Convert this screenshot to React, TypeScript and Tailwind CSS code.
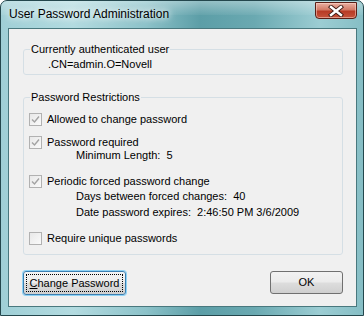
import React from "react";

function Check({ checked }: { checked: boolean }) {
  return (
    <div className="w-[13px] h-[13px] shrink-0 border border-[#b1b1b1] bg-[linear-gradient(135deg,#e8e8e8,#fafafa)] flex items-center justify-center">
      {checked && (
        <svg width="9" height="9" viewBox="0 0 9 9">
          <path d="M1 4.5 L3.5 7 L8 1.5" fill="none" stroke="#a3a3a3" strokeWidth="1.4" />
        </svg>
      )}
    </div>
  );
}

function CheckRow({ checked, label, className }: { checked: boolean; label: string; className: string }) {
  return (
    <div className={"ml-[5px] flex items-center h-[13px] " + className}>
      <Check checked={checked} />
      <span className="ml-[5px] leading-[13px] whitespace-nowrap">{label}</span>
    </div>
  );
}

export default function App() {
  return (
    <div className="w-[364px] h-[316px] relative overflow-hidden rounded-t-[7px] border border-[#24474d] bg-[linear-gradient(90deg,#9fcfd6_0%,#b3dbe0_20%,#8cc2c9_40%,#5c9ea7_55%,#6aa9b1_70%,#9ccdd3_88%,#86bec5_100%)] flex flex-col font-['Liberation_Sans',sans-serif] text-[11px] text-black">
      <div className="absolute inset-x-0 top-0 h-[14px] bg-[linear-gradient(180deg,rgba(255,255,255,0.35),rgba(255,255,255,0.05))] pointer-events-none" />
      {/* title bar */}
      <div className="h-[27px] shrink-0 flex items-start relative">
        <span className="pl-[8px] pt-[5px] text-[12px] leading-[16px] text-black [text-shadow:0_0_6px_#ffffff,0_0_10px_#ffffff]">
          User Password Administration
        </span>
        <div className="absolute top-[1px] right-[6px] w-[42px] h-[17px] rounded-b-[4px] border border-[#5b1f16] bg-[linear-gradient(180deg,#e9b0a2_0%,#d27a66_45%,#b83b25_55%,#c6543c_100%)] flex items-center justify-center shadow-[inset_0_0_0_1px_rgba(255,220,210,0.5)]">
          <svg width="16" height="12" viewBox="0 0 16 12">
            <path d="M3 2 L13 10 M13 2 L3 10" stroke="#3b1a14" strokeWidth="4.2" strokeLinecap="square" />
            <path d="M3 2 L13 10 M13 2 L3 10" stroke="#ffffff" strokeWidth="2.4" strokeLinecap="square" />
          </svg>
        </div>
      </div>
      {/* client area */}
      <div className="flex-1 ml-[7px] mr-[6px] mb-[8px] border border-[#49787e] bg-[#f0f0f0] flex flex-col">
        <fieldset className="mt-[14px] ml-[14px] mr-[13px] border border-[#d5dfe5] rounded-[3px] p-0 pt-[2px] pb-[3px]">
          <legend className="ml-[6px] px-[1px] leading-[13px]">Currently authenticated user</legend>
          <div className="ml-[24px] leading-[13px]">.CN=admin.O=Novell</div>
        </fieldset>
        <fieldset className="mt-[16px] ml-[14px] mr-[13px] border border-[#d5dfe5] rounded-[3px] p-0 pt-[9px] pb-[9px]">
          <legend className="ml-[6px] px-[1px] leading-[13px]">Password Restrictions</legend>
          <CheckRow checked label="Allowed to change password" className="" />
          <CheckRow checked label="Password required" className="mt-[10px]" />
          <div className="ml-[52px] leading-[13px] whitespace-pre">Minimum Length:  5</div>
          <CheckRow checked label="Periodic forced password change" className="mt-[13px]" />
          <div className="ml-[52px] mt-[2px] leading-[13px] whitespace-pre">Days between forced changes:  40</div>
          <div className="ml-[52px] mt-[3px] leading-[13px] whitespace-pre">Date password expires:  2:46:50 PM 3/6/2009</div>
          <CheckRow checked={false} label="Require unique passwords" className="mt-[13px]" />
        </fieldset>
        <div className="mt-[16px] ml-[14px] mr-[13px] flex justify-between">
          <button className="w-[103px] h-[24px] rounded-[3px] border border-[#3c7fb1] shadow-[0_0_0_1px_#8fd3f5] bg-[linear-gradient(180deg,#f4f4f4_0%,#ececec_48%,#dddddd_52%,#cfcfcf_100%)] p-[2px]">
            <div className="w-full h-full border border-dotted border-black flex items-center justify-center leading-[13px]">
              <span><span className="underline">C</span>hange Password</span>
            </div>
          </button>
          <button className="w-[73px] h-[23px] rounded-[3px] border border-[#707070] bg-[linear-gradient(180deg,#f2f2f2_0%,#ebebeb_48%,#dddddd_52%,#cfcfcf_100%)] flex items-center justify-center leading-[13px]">
            OK
          </button>
        </div>
      </div>
    </div>
  );
}
